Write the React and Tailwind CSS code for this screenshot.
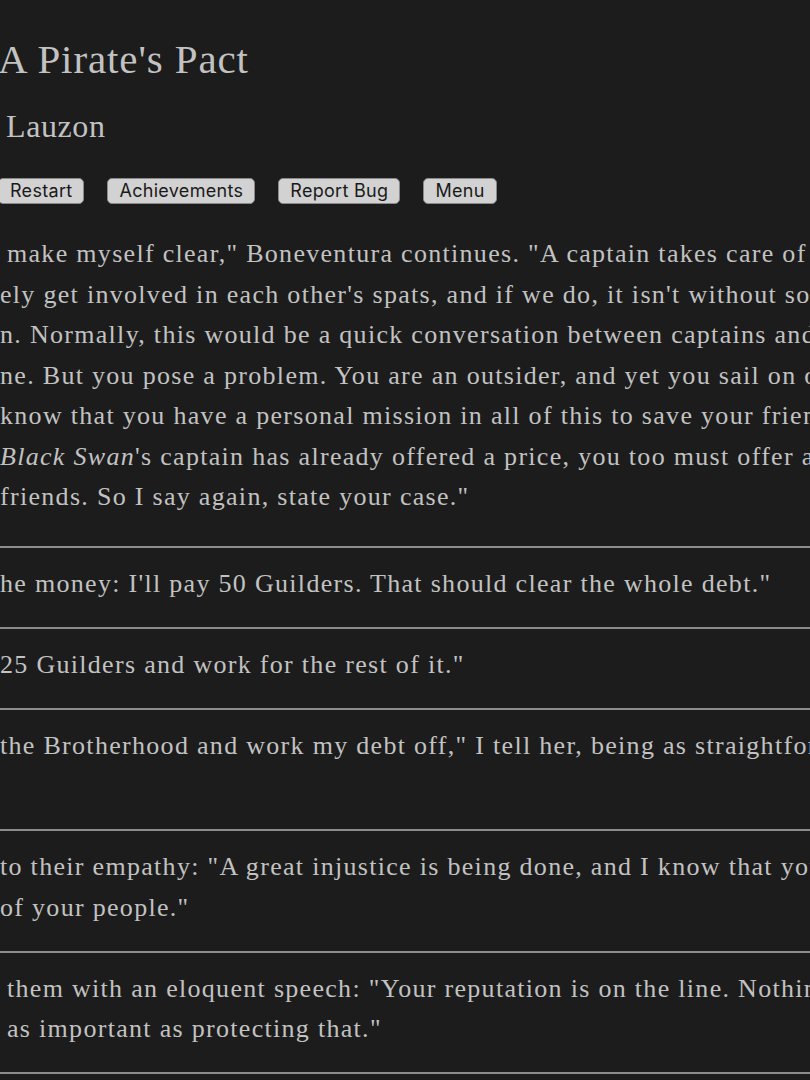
const serif = { fontFamily: '"Liberation Serif", "Times New Roman", serif' }

const paragraph = [
  { pad: 'pl-[7px]', text: 'make myself clear," Boneventura continues. "A captain takes care of his own.' },
  { pad: 'pl-0', text: "ely get involved in each other's spats, and if we do, it isn't without some" },
  { pad: 'pl-0', text: 'n. Normally, this would be a quick conversation between captains and' },
  { pad: 'pl-0', text: 'ne. But you pose a problem. You are an outsider, and yet you sail on one' },
  { pad: 'pl-0', text: 'know that you have a personal mission in all of this to save your friends.' },
  { pad: 'pl-0', italic: 'Black Swan', text: "'s captain has already offered a price, you too must offer a price" },
  { pad: 'pl-0', text: 'friends. So I say again, state your case."' },
]

const choices = [
  { lines: [{ pad: 'pl-0', text: 'he money: I\'ll pay 50 Guilders. That should clear the whole debt."' }] },
  { lines: [{ pad: 'pl-0', text: '25 Guilders and work for the rest of it."' }] },
  {
    lines: [
      { pad: 'pl-0', text: 'the Brotherhood and work my debt off," I tell her, being as straightforward as' },
      { pad: 'pl-0', text: '' },
    ],
  },
  {
    lines: [
      { pad: 'pl-0', text: 'to their empathy: "A great injustice is being done, and I know that you' },
      { pad: 'pl-0', text: 'of your people."' },
    ],
  },
  {
    lines: [
      { pad: 'pl-[7px]', text: 'them with an eloquent speech: "Your reputation is on the line. Nothing' },
      { pad: 'pl-[7px]', text: 'as important as protecting that."' },
    ],
  },
]

function Line({ line }) {
  return (
    <div className={`h-[40.5px] whitespace-nowrap leading-[40.5px] ${line.pad}`}>
      {line.italic && <i>{line.italic}</i>}
      {line.text || '\u00a0'}
    </div>
  )
}

const buttons = ['Restart', 'Achievements', 'Report Bug', 'Menu']

export default function App() {
  return (
    <main className="min-h-screen overflow-hidden bg-[#1c1c1c] pb-10 text-[#c2c2c2]" style={serif}>
      <h1 className="-ml-[2px] pt-[35px] text-[41px] leading-[48px] tracking-[0.9px] whitespace-nowrap">
        A Pirate's Pact
      </h1>
      <h2 className="mt-[23px] pl-[6px] text-[32px] leading-[40px] tracking-[0.6px] whitespace-nowrap">Lauzon</h2>

      <div className="-ml-[2px] mt-[32px] flex gap-[23px]">
        {buttons.map((label) => (
          <button
            key={label}
            className="h-[26px] rounded-[5px] border border-[#8a8a8a] bg-[#d2d2d2] px-[11px] text-[18px] leading-none tracking-[0.3px] text-[#1a1a1a]"
            style={{ fontFamily: 'Inter, "Liberation Sans", sans-serif' }}
          >
            {label}
          </button>
        ))}
      </div>

      <div className="mt-[30px] text-[26px] tracking-[1.3px]">
        {paragraph.map((line, i) => (
          <Line key={i} line={line} />
        ))}
      </div>

      <div className="mt-[28px] border-b-2 border-[#8c8c8c] text-[26px] tracking-[1.3px]">
        {choices.map((choice, i) => (
          <div key={i} className="border-t-2 border-[#8c8c8c] pt-[16px] pb-[22.5px]">
            {choice.lines.map((line, j) => (
              <Line key={j} line={line} />
            ))}
          </div>
        ))}
      </div>
    </main>
  )
}
